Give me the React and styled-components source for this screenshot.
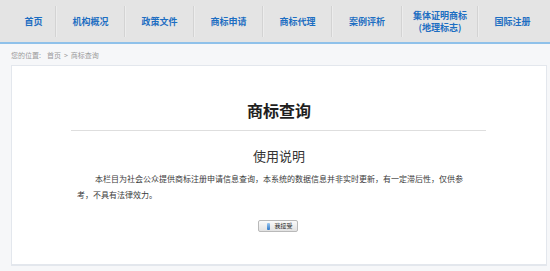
import React from 'react';
import styled, { createGlobalStyle } from 'styled-components';

const Global = createGlobalStyle`
  html, body {
    margin: 0;
    padding: 0;
    background: #f6f7f9;
    font-family: "Noto Sans CJK SC", "Noto Sans", sans-serif;
  }
`;

const Page = styled.div`
  width: 550px;
  height: 271px;
  overflow: hidden;
`;

const NavBar = styled.div`
  height: 42px;
  background: #e4e4e4;
  border-bottom: 2px solid #8fc1ea;
  display: flex;
  padding-left: 11px;
`;

const NavItem = styled.div`
  width: ${p => p.w}px;
  flex: none;
  display: flex;
  align-items: center;
  justify-content: center;
  text-align: center;
  color: #1d6ec2;
  font-size: 9px;
  font-weight: bold;
  line-height: 12px;
  position: relative;
  padding-top: 1px;
  box-sizing: border-box;
  ${p => !p.last && `
    &::after {
      content: '';
      position: absolute;
      right: 0;
      top: 6px;
      bottom: 5px;
      width: 1px;
      background: #d3d3d3;
      box-shadow: 1px 0 0 #ececec;
    }
  `}
`;

const Crumb = styled.div`
  height: 10px;
  line-height: 10px;
  margin: 6px 0 5px 11px;
  font-size: 7px;
  color: #9a9a9a;
  span { margin: 0 3px; }
`;

const Card = styled.div`
  margin: 0 3px 0 11px;
  height: 201px;
  box-sizing: border-box;
  background: #fff;
  border: 1px solid #e3e7ed;
  border-bottom-width: 2px;
  padding-top: 34px;
  display: flex;
  flex-direction: column;
  align-items: center;
`;

const Title = styled.h1`
  margin: 0;
  font-size: 16px;
  line-height: 20px;
  font-weight: bold;
  color: #1e1e1e;
`;

const Rule = styled.div`
  width: 415px;
  height: 1px;
  background: #dedede;
  margin: 10px 2px 0 0;
`;

const SubTitle = styled.h2`
  margin: 18px 0 0;
  font-size: 13px;
  line-height: 16px;
  font-weight: normal;
  color: #333;
  font-family: "Liberation Serif", "Noto Sans CJK SC", serif;
`;

const Para = styled.p`
  width: 390px;
  margin: 7px 0 0 -14px;
  font-size: 8px;
  line-height: 16px;
  text-indent: 18px;
  color: #3a3a3a;
  font-family: "Liberation Serif", "Noto Sans CJK SC", serif;
`;

const AcceptButton = styled.button`
  margin: 16px 2px 0 0;
  width: 40px;
  height: 12px;
  padding: 0 0 0 4px;
  border: 1px solid #b9b9b9;
  border-radius: 2px;
  background: linear-gradient(#fafafa, #e2e2e2);
  display: flex;
  align-items: center;
  justify-content: center;
  gap: 3px;
  font-size: 6px;
  line-height: 10px;
  color: #222;
  font-family: "Noto Sans CJK SC", sans-serif;
`;

const Tag = styled.i`
  width: 3px;
  height: 7px;
  background: linear-gradient(#9cc8f0, #2f78c8);
  border-radius: 1px;
  margin-right: 1px;
`;

const items = [
  { w: 45, label: '首页' },
  { w: 69, label: '机构概况' },
  { w: 69, label: '政策文件' },
  { w: 69, label: '商标申请' },
  { w: 69, label: '商标代理' },
  { w: 70, label: '案例评析' },
  { w: 76, label: <>集体证明商标<br />(地理标志)</> },
  { w: 69, label: '国际注册' },
];

export default function App() {
  return (
    <Page>
      <Global />
      <NavBar>
        {items.map((it, i) => (
          <NavItem key={i} w={it.w} last={i === items.length - 1}>
            <span>{it.label}</span>
          </NavItem>
        ))}
      </NavBar>
      <Crumb>
        您的位置:<span></span>首页<span>&gt;</span>商标查询
      </Crumb>
      <Card>
        <Title>商标查询</Title>
        <Rule />
        <SubTitle>使用说明</SubTitle>
        <Para>
          本栏目为社会公众提供商标注册申请信息查询，本系统的数据信息并非实时更新，有一定滞后性，仅供参考，不具有法律效力。
        </Para>
        <AcceptButton>
          <Tag />我接受
        </AcceptButton>
      </Card>
    </Page>
  );
}
